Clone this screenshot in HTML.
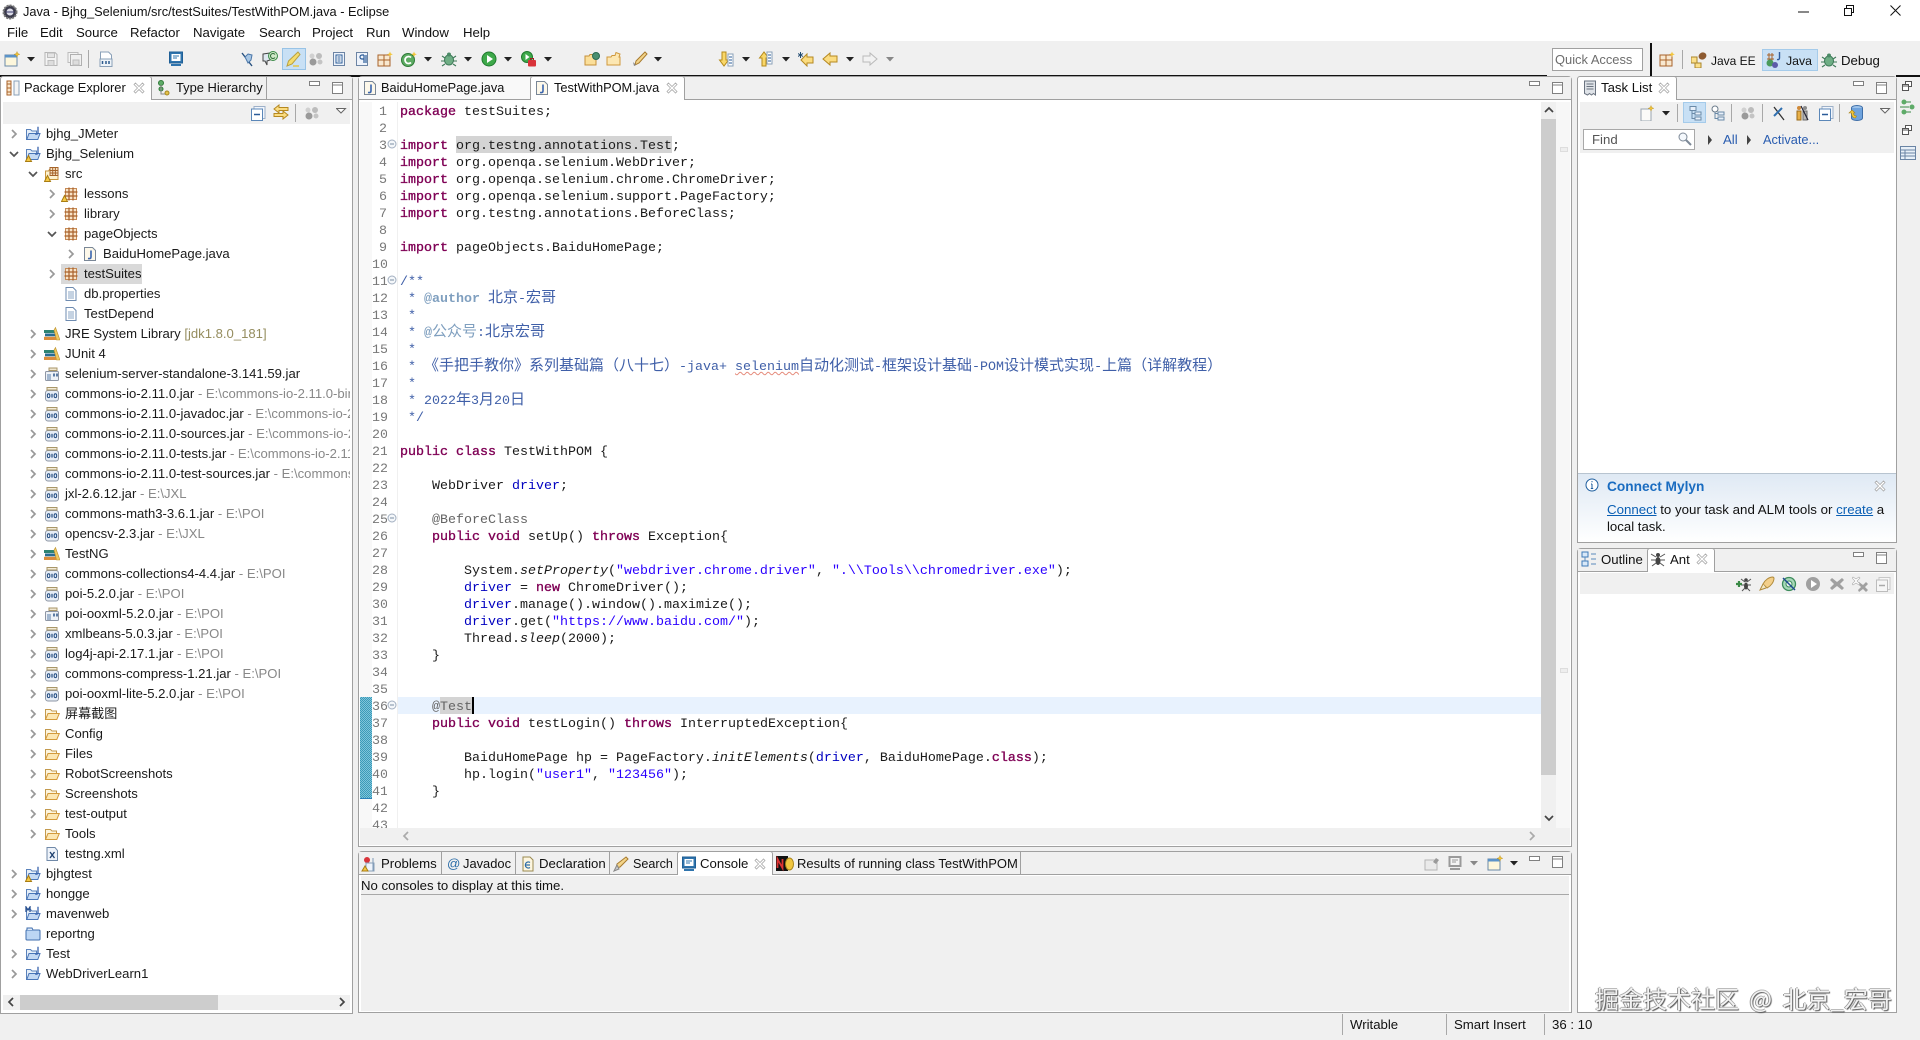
<!DOCTYPE html>
<html lang="en"><head><meta charset="utf-8"><title>Java - Bjhg_Selenium/src/testSuites/TestWithPOM.java - Eclipse</title>
<style>
html,body{margin:0;padding:0;width:1920px;height:1040px;overflow:hidden;background:#f0f0f0}
body{position:relative;font-family:"Liberation Sans","Noto Sans CJK SC",sans-serif;font-size:13.2px;color:#111}
div,svg{position:absolute}
svg{overflow:visible}
.g{width:16px;height:16px}
.t{white-space:pre;line-height:20px;height:20px}
.p{background:#fff;border:1px solid #a0a0a0;border-radius:4px 4px 0 0;box-sizing:border-box}
.tb{background:#f0f0f0;border-bottom:1px solid #a0a0a0;box-sizing:border-box;height:23px}
.at{background:#fff;border:1px solid #a0a0a0;border-bottom:0;border-radius:3px 3px 0 0;box-sizing:border-box}
.sep{width:1px;background:#a8a8a8}
.vb{background:#f0f0f0}
#tree{left:1px;top:124px;width:349px;height:860px;overflow:hidden}
.r{left:0;width:349px;height:20px;line-height:20px;white-space:pre;font-size:13.1px;color:#1a1a1a}
.r span{position:absolute;white-space:pre}
.r em{font-style:normal;color:#888}
.r svg{top:2px}
#code{left:400px;top:104px;width:1141px;height:724px;overflow:hidden;font-family:"Liberation Mono",monospace;font-size:13.33px;color:#1a1a1a}
.l{left:0;height:17px;line-height:17px;white-space:pre;width:1141px;text-spacing-trim:space-all}
.l b{color:#7f0055;font-weight:normal;-webkit-text-stroke:.35px #7f0055}
.c{color:#3f5fa8}.a{color:#646464}.s{color:#2a00ff}.f{color:#0000c0}.d{color:#7f9fbf;font-weight:bold}
.l em{font-style:italic}
.z{font-family:"Noto Sans CJK SC",sans-serif;font-size:15px;font-weight:400}
#nums{left:372px;top:104px;width:15px;height:724px;overflow:hidden;text-align:right;font-family:"Liberation Mono",monospace;font-size:13.33px;line-height:17px;color:#787878;white-space:pre}
#wm{left:1595px;top:980px;font-size:24px;line-height:36px;height:36px;color:#f2f2f2;white-space:pre;word-spacing:5px;font-family:"Noto Sans CJK SC",sans-serif;text-shadow:1px 1px 1px #555,-1px 0 0 #999,0 -1px 0 #bbb}
a{color:#0a5fb4}
</style></head>
<body>
<svg width="0" height="0" style="left:0;top:0">
<defs>
<symbol id="chr" viewBox="0 0 8 12"><path d="M2 2l4 4-4 4" fill="none" stroke="#999" stroke-width="1.7"/></symbol>
<symbol id="chd" viewBox="0 0 12 8"><path d="M2 2l4 4 4-4" fill="none" stroke="#555" stroke-width="1.7"/></symbol>
<symbol id="prj" viewBox="0 0 16 16"><path d="M1.500 13.500V3.500h4L7 5h4.500v8.500z" fill="#e6eff9" stroke="#5a82bb"/><path d="M1.800 13.500l2.200-6h11l-2.200 6z" fill="#c4d9f3" stroke="#4a76b8"/><path d="M13 .8v5.700q0 2-2.800 1.500" fill="none" stroke="#3a64ad" stroke-width="1.300"/></symbol>
<symbol id="warn" viewBox="0 0 16 16"><path d="M.5 15.500L3.500 9.500l3 6z" fill="#f6c945" stroke="#a97d12"/></symbol>
<symbol id="mvn" viewBox="0 0 16 16"><path d="M1.500 13.500V3.500h4L7 5h4.500v8.500z" fill="#e6eff9" stroke="#5a82bb"/><path d="M1.800 13.500l2.200-6h11l-2.200 6z" fill="#c4d9f3" stroke="#4a76b8"/><path d="M13 .8v5.700q0 2-2.800 1.500" fill="none" stroke="#3a64ad" stroke-width="1.300"/><path d="M1 6V1l2 3 2-3v5" fill="none" stroke="#274f8f" stroke-width="1.300"/></symbol>
<symbol id="cprj" viewBox="0 0 16 16"><rect x="1" y="4" width="14" height="10" rx="1" fill="#bcd6f4" stroke="#3f6eae"/><path d="M2 4V2h5l1 2" fill="#dfeaf8" stroke="#3f6eae"/></symbol>
<symbol id="src" viewBox="0 0 16 16"><path d="M1.500 13.500V5h3l1-1.500h8.500v10z" fill="#fdf2d0" stroke="#c8963f"/><path d="M6 1.500h8v8H6z" fill="#f7e2c4" stroke="#a5642a"/><path d="M6 4.500h8M6 7h8M8.700 1.500v8M11.400 1.500v8" stroke="#a5642a" fill="none"/></symbol>
<symbol id="pkg" viewBox="0 0 16 16"><rect x="2.500" y="2.500" width="11" height="11" fill="#f8e4c8" stroke="#c58a55"/><path d="M1.500 6h13M1.500 10h13M6 1.500v13M10 1.500v13" stroke="#a9602a" stroke-width="1.200" fill="none"/></symbol>
<symbol id="jar" viewBox="0 0 16 16"><rect x="1.500" y="4.500" width="13" height="10.500" rx="2.500" fill="#e6edf6" stroke="#8e96a4"/><rect x="3" y="1.500" width="10" height="2.500" fill="#f4ecd8" stroke="#a89668"/><ellipse cx="4.600" cy="9.700" rx="1.300" ry="1.900" fill="none" stroke="#1f4a80"/><path d="M8 7.800v3.800" stroke="#1f4a80" stroke-width="1.200"/><ellipse cx="11.400" cy="9.700" rx="1.300" ry="1.900" fill="none" stroke="#1f4a80"/></symbol>
<symbol id="jar2" viewBox="0 0 16 16"><rect x="1.500" y="5.500" width="13" height="9" rx="1" fill="#eef2f7" stroke="#8e96a4"/><rect x="5" y="2" width="8" height="2.500" fill="#f1e7d0" stroke="#a89668"/><path d="M3 9h4M3 11h4M3 13h4" stroke="#5a7fa8"/><path d="M10 7.500v3M13 7.500v3" stroke="#1f4a80" stroke-width="1.400"/></symbol>
<symbol id="lib" viewBox="0 0 16 16"><rect x="0" y="4" width="11" height="3" fill="#2f8472"/><rect x="1" y="7.500" width="11" height="2.800" fill="#2a6c93"/><rect x="0" y="10.800" width="12" height="3.200" fill="#db8c3b"/><path d="M11.500 1.500l4.500 12.500h-3.500L10 4z" fill="#f1c95e" stroke="#b98f2c" stroke-width=".6"/></symbol>
<symbol id="fold" viewBox="0 0 16 16"><path d="M1.500 13.500V3.500h5L8 5h4.500v3" fill="#fdf5de" stroke="#c39a4e"/><path d="M1.500 13.500l2.500-6h11.300l-2.500 6z" fill="#fce7b3" stroke="#d39a3c"/></symbol>
<symbol id="file" viewBox="0 0 16 16"><path d="M3 1.500h7l3 3v10H3z" fill="#fff" stroke="#6e8bb0"/><path d="M5 6h6M5 8h6M5 10h6M5 12h6" stroke="#8aa4c4"/></symbol>
<symbol id="jf" viewBox="0 0 16 16"><path d="M2.500 1.500h8l3 3v10h-11z" fill="#fdf8ea" stroke="#7a8797"/><path d="M9 4.500v6.500q0 2-3 1.500" fill="none" stroke="#3a64ad" stroke-width="1.600"/></symbol>
<symbol id="xml" viewBox="0 0 16 16"><path d="M3 1.500h8l2.500 3v10H3z" fill="#eef3fa" stroke="#7089a8"/><path d="M6 6l4.500 6M10.500 6L6 12" stroke="#1d3f6e" stroke-width="1.300"/></symbol>
<symbol id="x" viewBox="0 0 12 12"><path d="M2.500 1L6 4.500 9.500 1 11 2.500 7.500 6 11 9.500 9.500 11 6 7.500 2.500 11 1 9.500 4.500 6 1 2.500z" fill="#fff" stroke="#aaa" stroke-width=".8"/></symbol>
<symbol id="min" viewBox="0 0 12 6"><rect x=".5" y=".5" width="10" height="4" fill="#fff" stroke="#808080"/></symbol>
<symbol id="max" viewBox="0 0 12 12"><rect x=".5" y=".5" width="10" height="11" fill="#fff" stroke="#808080"/><path d="M.5 3h10" stroke="#808080"/></symbol>
<symbol id="dd" viewBox="0 0 8 5"><path d="M0 0h8L4 4.500z" fill="#222"/></symbol>
<symbol id="ddg" viewBox="0 0 8 5"><path d="M0 0h8L4 4.500z" fill="#888"/></symbol>
<symbol id="ddo" viewBox="0 0 11 6"><path d="M.5.500h9L5 5z" fill="#fff" stroke="#666"/></symbol>
<symbol id="new" viewBox="0 0 16 16"><rect x="1" y="4" width="12" height="11" fill="#fdf7dc" stroke="#6a8aa8"/><rect x="1" y="4" width="12" height="2.500" fill="#5b93c9"/><path d="M13 .5l.8 2 2 .8-2 .8-.8 2-.8-2-2-.8 2-.8z" fill="#f3c63a" stroke="#b58a1a" stroke-width=".4"/></symbol>
<symbol id="sv" viewBox="0 0 16 16"><path d="M2 1.500h10l2 2v11H2z" fill="#f4f4f4" stroke="#b5b5b5"/><rect x="4.500" y="2" width="7" height="4.500" fill="#e4e4e4" stroke="#bdbdbd"/><rect x="5" y="9.500" width="6" height="5" fill="#ddd" stroke="#bdbdbd"/></symbol>
<symbol id="sa" viewBox="0 0 16 16"><rect x="1" y="1.500" width="10" height="10" fill="#f4f4f4" stroke="#bcbcbc"/><rect x="3.500" y="3.500" width="11" height="11" fill="#f0f0f0" stroke="#b0b0b0"/><rect x="6" y="9" width="6" height="5" fill="#ddd" stroke="#bdbdbd"/></symbol>
<symbol id="bin" viewBox="0 0 16 16"><path d="M2.500 1h8l3 3v4h-11z" fill="#fff" stroke="#8aa0b8"/><rect x="2" y="8" width="12" height="7.500" fill="#eef3f8" stroke="#8aa0b8"/><path d="M4.500 10v3M8 10v3M11 10v3" stroke="#2c5b8d" stroke-width="1.500"/></symbol>
<symbol id="con" viewBox="0 0 16 16"><rect x="1.500" y="1" width="13" height="11" fill="#2f74ad" stroke="#1f5f96"/><rect x="3.500" y="3" width="9" height="7" fill="#fff"/><path d="M5 5h6M5 7h4" stroke="#2f74ad"/><rect x="3" y="13" width="10" height="2" fill="#2f74ad"/></symbol>
<symbol id="cong" viewBox="0 0 16 16"><rect x="1.500" y="1" width="13" height="11" fill="#9a9a9a"/><rect x="3.500" y="3" width="9" height="7" fill="#f4f4f4"/><path d="M5 5h6M5 7h4" stroke="#9a9a9a"/><rect x="3" y="13" width="10" height="2" fill="#9a9a9a"/></symbol>
<symbol id="nxt" viewBox="0 0 16 16"><path d="M3 2l10 13" stroke="#26507f" stroke-width="1.400"/><path d="M9 3l4 1-1 5-3 3-3-6z" fill="#a9c7e4" stroke="#4a76a8"/></symbol>
<symbol id="ref" viewBox="0 0 16 16"><path d="M1 3l7-1v7l-3 1v4l-2-4H1z" fill="#dfe8f0" stroke="#444"/><circle cx="11" cy="5" r="4.500" fill="#cfe8c8" stroke="#3a8a46"/><path d="M13 3.500A2.500 2.500 0 1 0 13 6.500" fill="none" stroke="#2f6f38"/></symbol>
<symbol id="hl" viewBox="0 0 16 16"><path d="M13 1l2 2.500L7 13l-5 2 1.500-5z" fill="#f4dc6e" stroke="#b8a040"/><path d="M8 15h6" stroke="#e4c648" stroke-width="1.500"/></symbol>
<symbol id="gr" viewBox="0 0 16 16"><circle cx="5" cy="11" r="3.500" fill="#9a9a9a"/><circle cx="11" cy="5" r="3" fill="#bcbcbc"/><circle cx="4" cy="5" r="2.500" fill="#d0d0d0"/><circle cx="12" cy="11" r="2.500" fill="#c4c4c4"/></symbol>
<symbol id="tbl" viewBox="0 0 16 16"><rect x="2.500" y="1.500" width="11" height="13" fill="#eef3fb" stroke="#6c84a4"/><rect x="5" y="4" width="6" height="8" fill="#fff" stroke="#2b5c98"/><path d="M6.500 6h3M6.500 8h3M6.500 10h3" stroke="#2b5c98"/></symbol>
<symbol id="pil" viewBox="0 0 16 16"><rect x="2.500" y="1.500" width="11" height="13" fill="#eef3fb" stroke="#6c84a4"/><path d="M10 4v8M12 4v8M10 4H8a2 2 0 0 0 0 4h2" fill="none" stroke="#2b5c98" stroke-width="1.200"/></symbol>
<symbol id="grid" viewBox="0 0 16 16"><rect x="1" y="4" width="12" height="11" fill="#f8e8d0" stroke="#a8622a"/><path d="M1 9h12M7 4v11" stroke="#a8622a"/><path d="M13 .5l.8 2 2 .8-2 .8-.8 2-.8-2-2-.8 2-.8z" fill="#f3c63a"/></symbol>
<symbol id="cg" viewBox="0 0 16 16"><circle cx="7" cy="9" r="6.500" fill="#5cab62" stroke="#2f7a38"/><path d="M10 6.500A3.500 3.500 0 1 0 10 11.500" fill="none" stroke="#fff" stroke-width="1.800"/><path d="M13 .5l.8 2 2 .8-2 .8-.8 2-.8-2-2-.8 2-.8z" fill="#f3c63a"/></symbol>
<symbol id="bug" viewBox="0 0 16 16"><ellipse cx="8" cy="9" rx="4.500" ry="5" fill="#6fae85" stroke="#3e7a58"/><circle cx="8" cy="3.500" r="2" fill="#4c8a66"/><path d="M1 5l3 2M15 5l-3 2M0 10h3.500M16 10h-3.500M1 15l3-2M15 15l-3-2" stroke="#3e7a58" stroke-width="1.100"/></symbol>
<symbol id="run" viewBox="0 0 16 16"><circle cx="8" cy="8" r="7" fill="#3ea94a" stroke="#1f7a2e"/><path d="M6 4l6 4-6 4z" fill="#fff"/></symbol>
<symbol id="cov" viewBox="0 0 16 16"><circle cx="6" cy="6" r="5.500" fill="#3ea94a" stroke="#1f7a2e"/><path d="M4.500 3l4 3-4 3z" fill="#fff"/><rect x="7" y="9" width="8" height="6.500" rx="1" fill="#d9333a"/><path d="M9.500 9V7.500h3V9" fill="none" stroke="#a01e24"/></symbol>
<symbol id="fo2" viewBox="0 0 16 16"><path d="M1 14V5h4l1-1.500h6V14z" fill="#fbdf9a" stroke="#c6913a"/><circle cx="12" cy="5" r="3.500" fill="#4a8f70" stroke="#2a6a52"/></symbol>
<symbol id="fo3" viewBox="0 0 16 16"><path d="M1 14V6h4l1-1.500h3l1-3 4 1.500-1 3h1V14z" fill="#fce7b3" stroke="#cf983c"/></symbol>
<symbol id="pen" viewBox="0 0 16 16"><path d="M13 1l2 2-8 9-4 2 1-4z" fill="#f3d489" stroke="#a77a2e"/><path d="M1 11l3 3-2 1z" fill="#888"/></symbol>
<symbol id="au" viewBox="0 0 16 16"><path d="M4 1h4v8h2.500L6 15 1.500 9H4z" fill="#f9d769" stroke="#b58a1a"/><rect x="10" y="3" width="5" height="12" fill="#fff" stroke="#8aa0b8"/><path d="M11 6h3M11 9h3M11 12h3" stroke="#2b5c98"/></symbol>
<symbol id="ad" viewBox="0 0 16 16"><path d="M4 15h4V7h2.500L6 1 1.500 7H4z" fill="#f9d769" stroke="#b58a1a"/><rect x="9" y="1" width="5" height="12" fill="#fff" stroke="#8aa0b8"/><path d="M10 4h3M10 7h3M10 10h3" stroke="#2b5c98"/></symbol>
<symbol id="bl" viewBox="0 0 16 16"><path d="M1 8l7-6v3h7v6H8v3z" fill="#fbdc80" stroke="#b58820"/></symbol>
<symbol id="blx" viewBox="0 0 16 16"><path d="M3 9l6-6v3h6v6H9v3z" fill="#fbdc80" stroke="#b58820"/><path d="M2.500 1v6M0 2.500l5 3M5 2.500l-5 3" stroke="#1f4a70"/></symbol>
<symbol id="frg" viewBox="0 0 16 16"><path d="M15 8L8 2v3H1v6h7v3z" fill="#f2f2f2" stroke="#bababa"/></symbol>
<symbol id="jee" viewBox="0 0 16 16"><rect x="0" y="5" width="6" height="6" fill="#fbe08c" stroke="#a8842a"/><rect x="4" y="11" width="6" height="5" fill="#fbe08c" stroke="#a8842a"/><ellipse cx="11.500" cy="4" rx="4" ry="3.500" transform="rotate(-30 11.500 4)" fill="#8d5a30"/></symbol>
<symbol id="jav" viewBox="0 0 16 16"><path d="M1 3h7M1 7h7M3 1v8M6 1v8" stroke="#a8622a"/><circle cx="4" cy="11" r="3.500" fill="#4a9a5a"/><circle cx="9" cy="13" r="3" fill="#5c5ca8"/><path d="M13.500 0v6q0 2-2.500 1.500" fill="none" stroke="#2d5a9a" stroke-width="1.400"/></symbol>
<symbol id="hier" viewBox="0 0 16 16"><circle cx="5" cy="3" r="2.500" fill="#5eab68" stroke="#2f7a38"/><circle cx="5" cy="9" r="2" fill="#5eab68" stroke="#2f7a38"/><circle cx="11" cy="13" r="2" fill="#e6c24c" stroke="#a58820"/><path d="M5 5v9h4" fill="none" stroke="#888"/></symbol>
<symbol id="pe" viewBox="0 0 16 16"><path d="M2 1h4v14H2zM2 4h4M2 8h4M2 12h4" fill="#fbe8cc" stroke="#a8622a"/><rect x="9" y="1" width="5" height="14" fill="#f4f4f4" stroke="#8aa0b8"/></symbol>
<symbol id="col" viewBox="0 0 16 16"><rect x="4" y="1.500" width="11" height="12" fill="#f2f6fc" stroke="#9db0c8"/><rect x="1.500" y="4" width="11" height="11.500" fill="#fff" stroke="#5b87b8"/><path d="M4 9.500h6" stroke="#2b5c98" stroke-width="1.500"/></symbol>
<symbol id="lnk" viewBox="0 0 16 16"><path d="M6 1L1 5l5 4V6.500h9v-3H6z" fill="#fbdc80" stroke="#b58820"/><path d="M10 7l5 4-5 4v-2.500H1v-3h9z" fill="#fbdc80" stroke="#b58820"/></symbol>
<symbol id="task" viewBox="0 0 16 16"><path d="M2.500 1h11v14l-2-1.500-2 1.500-2-1.500-2 1.500-3-1.500z" fill="#dfe3e8" stroke="#6a7380"/><path d="M4.500 4h7M4.500 6.500h7M4.500 9h7" stroke="#6a7380"/></symbol>
<symbol id="nt" viewBox="0 0 16 16"><rect x="2" y="4" width="10" height="12" fill="#fbfbf8" stroke="#9aa4b0"/><path d="M12 .5l.8 2 2 .8-2 .8-.8 2-.8-2-2-.8 2-.8z" fill="#f3c63a" stroke="#b58a1a" stroke-width=".4"/></symbol>
<symbol id="tr1" viewBox="0 0 16 16"><path d="M3 1.500h6v4H3zM8 7h6v3H8zM8 12h6v3H8z" fill="#e8f0fa" stroke="#6a8aa8"/><path d="M5 5.500V13.500h3M5 8.500h3" stroke="#6a8aa8" fill="none"/></symbol>
<symbol id="tr2" viewBox="0 0 16 16"><circle cx="5" cy="4" r="3" fill="#fff" stroke="#6a7a8a"/><path d="M8 7h6v3H8zM8 12h6v3H8z" fill="#e8f0fa" stroke="#6a8aa8"/><path d="M5 7V13.500h3M5 8.500h3" stroke="#6a8aa8" fill="none"/></symbol>
<symbol id="fx" viewBox="0 0 16 16"><path d="M3 2l10 13" stroke="#333" stroke-width="1.300"/><path d="M3 11l8-8" stroke="#2f6fb0" stroke-width="2"/></symbol>
<symbol id="fp" viewBox="0 0 16 16"><circle cx="5" cy="3" r="2" fill="#d08a3a"/><path d="M3 6h4v9H3z" fill="#e8b048" stroke="#9a6a1a"/><circle cx="11" cy="3" r="2" fill="#8a8a8a"/><path d="M9 6h4v9H9z" fill="#b8b8b8" stroke="#6a6a6a"/><path d="M7 1l7 14" stroke="#223" stroke-width="1.200"/></symbol>
<symbol id="syn" viewBox="0 0 16 16"><ellipse cx="9" cy="3" rx="5.500" ry="2.500" fill="#9dc3ea" stroke="#3e6ea8"/><path d="M3.500 3v10c0 1.500 2.500 2.500 5.500 2.500s5.500-1 5.500-2.500V3" fill="#6fa3dd" stroke="#3e6ea8"/><path d="M1 8l3-3 3 3-1.500 0c0 2 1 3 3 3l-1 2c-3 0-4-2-4-5z" fill="#f3c63a" stroke="#a8841a" stroke-width=".6"/></symbol>
<symbol id="srch" viewBox="0 0 14 14"><circle cx="5" cy="5" r="4" fill="#f4f8fc" stroke="#7e8a98"/><path d="M8 8l5 5" stroke="#7e8a98" stroke-width="2"/></symbol>
<symbol id="pb" viewBox="0 0 16 16"><circle cx="6" cy="4" r="3" fill="#d9333a"/><rect x="5" y="7" width="8" height="8" fill="#eef3fa" stroke="#8aa0b8"/><path d="M1 15l3-5 3 5z" fill="#f6c945" stroke="#a97d12"/><path d="M12 2v13" stroke="#7e9ab8"/></symbol>
<symbol id="de" viewBox="0 0 16 16"><path d="M3 1h7l3 3v11H3z" fill="#fdf6e0" stroke="#9a8a50"/><path d="M10 6.500A3 3 0 1 0 10 11.500M5 9h5" fill="none" stroke="#2b6ca8" stroke-width="1.200"/></symbol>
<symbol id="sr" viewBox="0 0 16 16"><path d="M13 1l2 2-8 8-4 1 1-4z" fill="#f3d489" stroke="#a77a2e"/><path d="M4 9l-3 6 5-2z" fill="#ccc" stroke="#888"/></symbol>
<symbol id="ng" viewBox="0 0 18 18"><rect x="0" y="1" width="12" height="15" fill="#111"/><path d="M1.500 13V4l5 9V4" fill="none" stroke="#d33" stroke-width="1.800"/><ellipse cx="13.500" cy="9" rx="4" ry="6" fill="#f0c640" stroke="#a8841a"/></symbol>
<symbol id="ol" viewBox="0 0 16 16"><rect x="1" y="1" width="6" height="5" fill="#d8e8f8" stroke="#3e7ab8"/><rect x="1" y="10" width="6" height="5" fill="#d8e8f8" stroke="#3e7ab8"/><path d="M10 3h5M10 8h5M10 13h5M4 6v4" stroke="#5a8abb"/></symbol>
<symbol id="ant" viewBox="0 0 16 16"><ellipse cx="8" cy="10" rx="2.500" ry="4" fill="#444"/><circle cx="8" cy="4" r="2" fill="#444"/><path d="M1 3l5 3M15 3l-5 3M1 9h5M15 9h-5M2 15l4-3M14 15l-4-3" stroke="#555"/></symbol>
<symbol id="antp" viewBox="0 0 16 16"><ellipse cx="10" cy="10" rx="2" ry="3.500" fill="#444"/><circle cx="10" cy="4" r="1.800" fill="#444"/><path d="M5 3l4 3M15 3l-4 3M5 9h4M15 9h-4M6 15l3-3M14 15l-3-3" stroke="#555"/><path d="M0 8h6M3 5v6" stroke="#3a8a46" stroke-width="2.200"/></symbol>
<symbol id="rk" viewBox="0 0 16 16"><path d="M14 1l1 1c0 4-3 8-7 10l-4-4C6 4 10 1 14 1z" fill="#f3cf8a" stroke="#b08a3a"/><path d="M4 8l-3 6 6-2" fill="#f2e8c8" stroke="#b08a3a"/></symbol>
<symbol id="tg" viewBox="0 0 16 16"><circle cx="8" cy="8" r="6.500" fill="#a8d8b8" stroke="#3d8c5c" stroke-width="1.300"/><circle cx="8" cy="8" r="3" fill="#eef8f0" stroke="#3d8c5c"/><path d="M2 2l12 12" stroke="#1f4a90" stroke-width="1.500"/></symbol>
<symbol id="rg" viewBox="0 0 16 16"><circle cx="8" cy="8" r="7" fill="#a0a0a0"/><path d="M6 4l6 4-6 4z" fill="#fff"/></symbol>
<symbol id="xg" viewBox="0 0 16 16"><path d="M3 2l5 4 5-4 2 2-4 4 4 4-2 2-5-4-5 4-2-2 4-4-4-4z" fill="#a0a0a0"/></symbol>
<symbol id="xxg" viewBox="0 0 16 16"><path d="M7 6l4 3 3-3 2 2-3 3 3 3-2 2-3-3-4 3-1-2 3-3-3-3z" fill="#a0a0a0"/><path d="M1 1l3 2 3-2 1 1-3 3 3 3-1 1-3-2-3 2-1-1 3-3-3-3z" fill="#fff" stroke="#aaa" stroke-width=".6"/></symbol>
<symbol id="colg" viewBox="0 0 16 16"><rect x="4" y="1.500" width="11" height="12" fill="#f6f6f6" stroke="#c8c8c8"/><rect x="1.500" y="4" width="11" height="11.500" fill="#f6f6f6" stroke="#bcbcbc"/><path d="M4 9.500h6" stroke="#aaa" stroke-width="1.500"/></symbol>
<symbol id="pin" viewBox="0 0 16 16"><rect x="1" y="5" width="12" height="10" fill="#eaeaea" stroke="#b5b5b5"/><path d="M9 7l3-4 3 2-3 4z" fill="#9a9a9a"/></symbol>
<symbol id="res" viewBox="0 0 12 12"><rect x="3.500" y=".5" width="6" height="5" fill="#fff" stroke="#555"/><rect x=".5" y="3.500" width="6" height="6" fill="#fff" stroke="#555"/><path d="M.5 5h6" stroke="#555"/></symbol>
<symbol id="mod" viewBox="0 0 16 16"><path d="M5 3h6M5 13h6" stroke="#3a8a46"/><circle cx="4" cy="3" r="2.500" fill="#5eab68"/><circle cx="4" cy="13" r="2.500" fill="#5eab68"/><circle cx="12" cy="8" r="2.500" fill="#5eab68"/><path d="M0 8h9" stroke="#3a8a46"/></symbol>
<symbol id="tb2" viewBox="0 0 16 16"><rect x=".5" y="1.500" width="15" height="13" fill="#e8f0f8" stroke="#6a84a4"/><path d="M.5 5h15M.5 8h15M.5 11h15M5 5v10" stroke="#6a84a4"/></symbol>
<symbol id="fm" viewBox="0 0 10 10"><circle cx="5" cy="5" r="4" fill="#f4f7fa" stroke="#a2afc0"/><path d="M3 5h4" stroke="#7a8da2"/></symbol>
</defs></svg>

<!-- title & menu -->
<div style="left:0;top:0;width:1920px;height:41px;background:#fff"></div>
<svg class="g" style="left:2px;top:4px"><circle cx="8" cy="8" r="6.500" fill="#3a3a4a" stroke="#777" stroke-width="2" stroke-dasharray="2 1"/><circle cx="8" cy="8" r="3.500" fill="#dcdce8"/><path d="M4 8h8" stroke="#3a3a6a"/></svg>
<div class="t" style="left:23px;top:2px;font-size:12.8px">Java - Bjhg_Selenium/src/testSuites/TestWithPOM.java - Eclipse</div>
<svg width="12" height="12" style="left:1798px;top:5px"><path d="M0 7h11" stroke="#111"/></svg>
<svg width="12" height="12" style="left:1844px;top:5px"><rect x=".5" y="3.500" width="7" height="7" fill="#fff" stroke="#111"/><path d="M2.500 3V.5h7v7H8" fill="none" stroke="#111"/></svg>
<svg width="12" height="12" style="left:1890px;top:5px"><path d="M.5.500l10 10M10.500.5l-10 10" stroke="#111"/></svg>
<div class="t" style="left:7px;top:23px">File</div>
<div class="t" style="left:40px;top:23px">Edit</div>
<div class="t" style="left:76px;top:23px">Source</div>
<div class="t" style="left:130px;top:23px">Refactor</div>
<div class="t" style="left:193px;top:23px">Navigate</div>
<div class="t" style="left:259px;top:23px">Search</div>
<div class="t" style="left:312px;top:23px">Project</div>
<div class="t" style="left:366px;top:23px">Run</div>
<div class="t" style="left:402px;top:23px">Window</div>
<div class="t" style="left:463px;top:23px">Help</div>

<!-- toolbar -->
<div style="left:0;top:41px;width:1920px;height:34px;background:#f0f0f0"></div>
<div style="left:0;top:75px;width:1547px;height:1.500px;background:#111"></div>
<div style="left:1896px;top:75px;width:24px;height:1.500px;background:#111"></div>
<div style="left:1650px;top:43px;width:1.500px;height:33px;background:#111"></div>
<div style="left:282px;top:48px;width:24px;height:22px;background:#c8e0f5;border:1px solid #98c3e6;box-sizing:border-box"></div>
<svg class="g" style="left:4px;top:51px"><use href="#new"/></svg>
<svg width="8" height="5" style="left:27px;top:57px"><use href="#dd"/></svg>
<svg class="g" style="left:43px;top:51px"><use href="#sv"/></svg>
<svg class="g" style="left:67px;top:51px"><use href="#sa"/></svg>
<div class="sep" style="left:88px;top:50px;height:18px"></div>
<svg class="g" style="left:98px;top:51px"><use href="#bin"/></svg>
<svg class="g" style="left:168px;top:51px"><use href="#con"/></svg>
<svg class="g" style="left:239px;top:51px"><use href="#nxt"/></svg>
<svg class="g" style="left:262px;top:51px"><use href="#ref"/></svg>
<svg class="g" style="left:285px;top:51px"><use href="#hl"/></svg>
<svg class="g" style="left:308px;top:51px"><use href="#gr"/></svg>
<svg class="g" style="left:331px;top:51px"><use href="#tbl"/></svg>
<svg class="g" style="left:354px;top:51px"><use href="#pil"/></svg>
<svg class="g" style="left:377px;top:51px"><use href="#grid"/></svg>
<svg class="g" style="left:401px;top:51px"><use href="#cg"/></svg>
<svg width="8" height="5" style="left:424px;top:57px"><use href="#dd"/></svg>
<svg class="g" style="left:441px;top:51px"><use href="#bug"/></svg>
<svg width="8" height="5" style="left:464px;top:57px"><use href="#dd"/></svg>
<svg class="g" style="left:481px;top:51px"><use href="#run"/></svg>
<svg width="8" height="5" style="left:504px;top:57px"><use href="#dd"/></svg>
<svg class="g" style="left:521px;top:51px"><use href="#cov"/></svg>
<svg width="8" height="5" style="left:544px;top:57px"><use href="#dd"/></svg>
<svg class="g" style="left:584px;top:51px"><use href="#fo2"/></svg>
<svg class="g" style="left:606px;top:51px"><use href="#fo3"/></svg>
<svg class="g" style="left:632px;top:51px"><use href="#pen"/></svg>
<svg width="8" height="5" style="left:654px;top:57px"><use href="#dd"/></svg>
<svg class="g" style="left:718px;top:51px"><use href="#au"/></svg>
<svg width="8" height="5" style="left:742px;top:57px"><use href="#dd"/></svg>
<svg class="g" style="left:758px;top:51px"><use href="#ad"/></svg>
<svg width="8" height="5" style="left:782px;top:57px"><use href="#dd"/></svg>
<svg class="g" style="left:798px;top:51px"><use href="#blx"/></svg>
<svg class="g" style="left:822px;top:51px"><use href="#bl"/></svg>
<svg width="8" height="5" style="left:846px;top:57px"><use href="#dd"/></svg>
<svg class="g" style="left:862px;top:51px"><use href="#frg"/></svg>
<svg width="8" height="5" style="left:886px;top:57px"><use href="#ddg"/></svg>

<!-- quick access + perspectives -->
<div style="left:1552px;top:48px;width:91px;height:23px;background:#fff;border:1px solid #a0a0a0;box-sizing:border-box"></div>
<div class="t" style="left:1555px;top:50px;color:#6d6d6d;font-size:12.9px">Quick Access</div>
<svg class="g" style="left:1659px;top:51px"><use href="#grid"/></svg>
<div class="sep" style="left:1682px;top:50px;height:19px"></div>
<svg class="g" style="left:1691px;top:52px"><use href="#jee"/></svg>
<div class="t" style="left:1711px;top:51px;font-size:12px">Java EE</div>
<div style="left:1762px;top:49px;width:56px;height:22px;background:#c8e0f5;border:1px solid #a5cbea;box-sizing:border-box"></div>
<svg class="g" style="left:1766px;top:52px"><use href="#jav"/></svg>
<div class="t" style="left:1786px;top:51px;font-size:12.3px">Java</div>
<svg class="g" style="left:1821px;top:52px"><use href="#bug"/></svg>
<div class="t" style="left:1841px;top:51px">Debug</div>

<!-- package explorer -->
<div class="p" style="left:0;top:76px;width:353px;height:938px"></div>
<div class="tb" style="left:1px;top:77px;width:351px"></div>
<div class="at" style="left:0;top:76px;width:152px;height:24px"></div>
<div style="left:266px;top:77px;width:1px;height:22px;background:#a0a0a0"></div>
<svg class="g" style="left:5px;top:80px"><use href="#pe"/></svg>
<div class="t" style="left:24px;top:78px;font-size:12.9px">Package Explorer</div>
<svg width="12" height="12" style="left:133px;top:82px"><use href="#x"/></svg>
<svg class="g" style="left:156px;top:80px"><use href="#hier"/></svg>
<div class="t" style="left:176px;top:78px;font-size:12.9px">Type Hierarchy</div>
<svg width="12" height="6" style="left:309px;top:81px"><use href="#min"/></svg>
<svg width="12" height="12" style="left:332px;top:82px"><use href="#max"/></svg>
<div class="vb" style="left:3px;top:102px;width:347px;height:22px"></div>
<svg class="g" style="left:250px;top:105px"><use href="#col"/></svg>
<svg class="g" style="left:273px;top:104px"><use href="#lnk"/></svg>
<div class="sep" style="left:295px;top:104px;height:18px"></div>
<svg class="g" style="left:304px;top:105px"><use href="#gr"/></svg>
<svg width="11" height="6" style="left:336px;top:108px"><use href="#ddo"/></svg>

<div id="tree">
<div style="left:60px;top:140px;width:81px;height:20px;background:#d9d9d9"></div>
<div class="r" style="top:0"><svg width="8" height="12" style="left:9px;top:4px"><use href="#chr"/></svg><svg class="g" style="left:24px"><use href="#prj"/></svg><span style="left:45px">bjhg_JMeter</span></div>
<div class="r" style="top:20px"><svg width="12" height="8" style="left:7px;top:6px"><use href="#chd"/></svg><svg class="g" style="left:24px"><use href="#prj"/></svg><svg class="g" style="left:24px"><use href="#warn"/></svg><span style="left:45px">Bjhg_Selenium</span></div>
<div class="r" style="top:40px"><svg width="12" height="8" style="left:26px;top:6px"><use href="#chd"/></svg><svg class="g" style="left:43px"><use href="#src"/></svg><svg class="g" style="left:43px"><use href="#warn"/></svg><span style="left:64px">src</span></div>
<div class="r" style="top:60px"><svg width="8" height="12" style="left:47px;top:4px"><use href="#chr"/></svg><svg class="g" style="left:62px"><use href="#pkg"/></svg><svg class="g" style="left:60px"><use href="#warn"/></svg><span style="left:83px">lessons</span></div>
<div class="r" style="top:80px"><svg width="8" height="12" style="left:47px;top:4px"><use href="#chr"/></svg><svg class="g" style="left:62px"><use href="#pkg"/></svg><span style="left:83px">library</span></div>
<div class="r" style="top:100px"><svg width="12" height="8" style="left:45px;top:6px"><use href="#chd"/></svg><svg class="g" style="left:62px"><use href="#pkg"/></svg><span style="left:83px">pageObjects</span></div>
<div class="r" style="top:120px"><svg width="8" height="12" style="left:66px;top:4px"><use href="#chr"/></svg><svg class="g" style="left:81px"><use href="#jf"/></svg><span style="left:102px">BaiduHomePage.java</span></div>
<div class="r" style="top:140px"><svg width="8" height="12" style="left:47px;top:4px"><use href="#chr"/></svg><svg class="g" style="left:62px"><use href="#pkg"/></svg><span style="left:83px">testSuites</span></div>
<div class="r" style="top:160px"><svg class="g" style="left:62px"><use href="#file"/></svg><span style="left:83px">db.properties</span></div>
<div class="r" style="top:180px"><svg class="g" style="left:62px"><use href="#file"/></svg><span style="left:83px">TestDepend</span></div>
<div class="r" style="top:200px"><svg width="8" height="12" style="left:28px;top:4px"><use href="#chr"/></svg><svg class="g" style="left:43px"><use href="#lib"/></svg><span style="left:64px">JRE System Library <em style="color:#958d5f">[jdk1.8.0_181]</em></span></div>
<div class="r" style="top:220px"><svg width="8" height="12" style="left:28px;top:4px"><use href="#chr"/></svg><svg class="g" style="left:43px"><use href="#lib"/></svg><span style="left:64px">JUnit 4</span></div>
<div class="r" style="top:240px"><svg width="8" height="12" style="left:28px;top:4px"><use href="#chr"/></svg><svg class="g" style="left:43px"><use href="#jar2"/></svg><span style="left:64px">selenium-server-standalone-3.141.59.jar</span></div>
<div class="r" style="top:260px"><svg width="8" height="12" style="left:28px;top:4px"><use href="#chr"/></svg><svg class="g" style="left:43px"><use href="#jar"/></svg><span style="left:64px">commons-io-2.11.0.jar <em>- E:\commons-io-2.11.0-bin</em></span></div>
<div class="r" style="top:280px"><svg width="8" height="12" style="left:28px;top:4px"><use href="#chr"/></svg><svg class="g" style="left:43px"><use href="#jar"/></svg><span style="left:64px">commons-io-2.11.0-javadoc.jar <em>- E:\commons-io-2.11.0</em></span></div>
<div class="r" style="top:300px"><svg width="8" height="12" style="left:28px;top:4px"><use href="#chr"/></svg><svg class="g" style="left:43px"><use href="#jar"/></svg><span style="left:64px">commons-io-2.11.0-sources.jar <em>- E:\commons-io-2.11.0</em></span></div>
<div class="r" style="top:320px"><svg width="8" height="12" style="left:28px;top:4px"><use href="#chr"/></svg><svg class="g" style="left:43px"><use href="#jar"/></svg><span style="left:64px">commons-io-2.11.0-tests.jar <em>- E:\commons-io-2.11.0</em></span></div>
<div class="r" style="top:340px"><svg width="8" height="12" style="left:28px;top:4px"><use href="#chr"/></svg><svg class="g" style="left:43px"><use href="#jar"/></svg><span style="left:64px">commons-io-2.11.0-test-sources.jar <em>- E:\commons-io-2.11.0</em></span></div>
<div class="r" style="top:360px"><svg width="8" height="12" style="left:28px;top:4px"><use href="#chr"/></svg><svg class="g" style="left:43px"><use href="#jar"/></svg><span style="left:64px">jxl-2.6.12.jar <em>- E:\JXL</em></span></div>
<div class="r" style="top:380px"><svg width="8" height="12" style="left:28px;top:4px"><use href="#chr"/></svg><svg class="g" style="left:43px"><use href="#jar"/></svg><span style="left:64px">commons-math3-3.6.1.jar <em>- E:\POI</em></span></div>
<div class="r" style="top:400px"><svg width="8" height="12" style="left:28px;top:4px"><use href="#chr"/></svg><svg class="g" style="left:43px"><use href="#jar"/></svg><span style="left:64px">opencsv-2.3.jar <em>- E:\JXL</em></span></div>
<div class="r" style="top:420px"><svg width="8" height="12" style="left:28px;top:4px"><use href="#chr"/></svg><svg class="g" style="left:43px"><use href="#lib"/></svg><span style="left:64px">TestNG</span></div>
<div class="r" style="top:440px"><svg width="8" height="12" style="left:28px;top:4px"><use href="#chr"/></svg><svg class="g" style="left:43px"><use href="#jar"/></svg><span style="left:64px">commons-collections4-4.4.jar <em>- E:\POI</em></span></div>
<div class="r" style="top:460px"><svg width="8" height="12" style="left:28px;top:4px"><use href="#chr"/></svg><svg class="g" style="left:43px"><use href="#jar"/></svg><span style="left:64px">poi-5.2.0.jar <em>- E:\POI</em></span></div>
<div class="r" style="top:480px"><svg width="8" height="12" style="left:28px;top:4px"><use href="#chr"/></svg><svg class="g" style="left:43px"><use href="#jar2"/></svg><span style="left:64px">poi-ooxml-5.2.0.jar <em>- E:\POI</em></span></div>
<div class="r" style="top:500px"><svg width="8" height="12" style="left:28px;top:4px"><use href="#chr"/></svg><svg class="g" style="left:43px"><use href="#jar"/></svg><span style="left:64px">xmlbeans-5.0.3.jar <em>- E:\POI</em></span></div>
<div class="r" style="top:520px"><svg width="8" height="12" style="left:28px;top:4px"><use href="#chr"/></svg><svg class="g" style="left:43px"><use href="#jar"/></svg><span style="left:64px">log4j-api-2.17.1.jar <em>- E:\POI</em></span></div>
<div class="r" style="top:540px"><svg width="8" height="12" style="left:28px;top:4px"><use href="#chr"/></svg><svg class="g" style="left:43px"><use href="#jar"/></svg><span style="left:64px">commons-compress-1.21.jar <em>- E:\POI</em></span></div>
<div class="r" style="top:560px"><svg width="8" height="12" style="left:28px;top:4px"><use href="#chr"/></svg><svg class="g" style="left:43px"><use href="#jar"/></svg><span style="left:64px">poi-ooxml-lite-5.2.0.jar <em>- E:\POI</em></span></div>
<div class="r" style="top:580px"><svg width="8" height="12" style="left:28px;top:4px"><use href="#chr"/></svg><svg class="g" style="left:43px"><use href="#fold"/></svg><span style="left:64px">屏幕截图</span></div>
<div class="r" style="top:600px"><svg width="8" height="12" style="left:28px;top:4px"><use href="#chr"/></svg><svg class="g" style="left:43px"><use href="#fold"/></svg><span style="left:64px">Config</span></div>
<div class="r" style="top:620px"><svg width="8" height="12" style="left:28px;top:4px"><use href="#chr"/></svg><svg class="g" style="left:43px"><use href="#fold"/></svg><span style="left:64px">Files</span></div>
<div class="r" style="top:640px"><svg width="8" height="12" style="left:28px;top:4px"><use href="#chr"/></svg><svg class="g" style="left:43px"><use href="#fold"/></svg><span style="left:64px">RobotScreenshots</span></div>
<div class="r" style="top:660px"><svg width="8" height="12" style="left:28px;top:4px"><use href="#chr"/></svg><svg class="g" style="left:43px"><use href="#fold"/></svg><span style="left:64px">Screenshots</span></div>
<div class="r" style="top:680px"><svg width="8" height="12" style="left:28px;top:4px"><use href="#chr"/></svg><svg class="g" style="left:43px"><use href="#fold"/></svg><span style="left:64px">test-output</span></div>
<div class="r" style="top:700px"><svg width="8" height="12" style="left:28px;top:4px"><use href="#chr"/></svg><svg class="g" style="left:43px"><use href="#fold"/></svg><span style="left:64px">Tools</span></div>
<div class="r" style="top:720px"><svg class="g" style="left:43px"><use href="#xml"/></svg><span style="left:64px">testng.xml</span></div>
<div class="r" style="top:740px"><svg width="8" height="12" style="left:9px;top:4px"><use href="#chr"/></svg><svg class="g" style="left:24px"><use href="#prj"/></svg><svg class="g" style="left:24px"><use href="#warn"/></svg><span style="left:45px">bjhgtest</span></div>
<div class="r" style="top:760px"><svg width="8" height="12" style="left:9px;top:4px"><use href="#chr"/></svg><svg class="g" style="left:24px"><use href="#prj"/></svg><span style="left:45px">hongge</span></div>
<div class="r" style="top:780px"><svg width="8" height="12" style="left:9px;top:4px"><use href="#chr"/></svg><svg class="g" style="left:24px"><use href="#mvn"/></svg><span style="left:45px">mavenweb</span></div>
<div class="r" style="top:800px"><svg class="g" style="left:24px"><use href="#cprj"/></svg><span style="left:45px">reportng</span></div>
<div class="r" style="top:820px"><svg width="8" height="12" style="left:9px;top:4px"><use href="#chr"/></svg><svg class="g" style="left:24px"><use href="#prj"/></svg><span style="left:45px">Test</span></div>
<div class="r" style="top:840px"><svg width="8" height="12" style="left:9px;top:4px"><use href="#chr"/></svg><svg class="g" style="left:24px"><use href="#prj"/></svg><span style="left:45px">WebDriverLearn1</span></div>
</div>
<div class="vb" style="left:3px;top:995px;width:347px;height:15px"></div>
<div style="left:20px;top:995px;width:198px;height:15px;background:#cdcdcd"></div>
<svg width="8" height="12" style="left:7px;top:996px"><path d="M6 2L2 6l4 4" fill="none" stroke="#444" stroke-width="1.700"/></svg>
<svg width="8" height="12" style="left:338px;top:996px"><path d="M2 2l4 4-4 4" fill="none" stroke="#444" stroke-width="1.700"/></svg>

<!-- editor -->
<div class="p" style="left:358px;top:76px;width:1214px;height:771px"></div>
<div class="tb" style="left:359px;top:77px;width:1212px"></div>
<div style="left:359px;top:77px;width:172px;height:22px;background:#f9f9f9"></div>
<div class="at" style="left:530px;top:76px;width:155px;height:24px"></div>
<svg class="g" style="left:362px;top:80px"><use href="#jf"/></svg>
<div class="t" style="left:381px;top:78px;font-size:12.75px">BaiduHomePage.java</div>
<svg class="g" style="left:534px;top:80px"><use href="#jf"/></svg>
<div class="t" style="left:554px;top:78px;font-size:12.8px">TestWithPOM.java</div>
<svg width="12" height="12" style="left:666px;top:82px"><use href="#x"/></svg>
<svg width="12" height="6" style="left:1529px;top:81px"><use href="#min"/></svg>
<svg width="12" height="12" style="left:1552px;top:82px"><use href="#max"/></svg>
<div style="left:360px;top:102px;width:12px;height:726px;background:#f8f8f8"></div>
<div style="left:360px;top:697px;width:12px;height:102px;background:#4fa6c4;border:solid #2b80b8;border-width:0 0 1px 0;box-sizing:border-box;background-image:repeating-conic-gradient(#3b9ab8 0 25%,#7fc4da 0 50%);background-size:2px 2px"></div>
<div style="left:397px;top:102px;width:1px;height:726px;background:#f0f0f0"></div>
<div style="left:398px;top:697px;width:1143px;height:17px;background:#e8f2fe"></div>
<div style="left:456px;top:136px;width:216px;height:17px;background:#d4d4d4"></div>
<div style="left:440px;top:697px;width:32px;height:17px;background:#d4d4d4"></div>
<div id="nums">1
2
3
4
5
6
7
8
9
10
11
12
13
14
15
16
17
18
19
20
21
22
23
24
25
26
27
28
29
30
31
32
33
34
35
36
37
38
39
40
41
42
43</div>
<svg width="10" height="10" style="left:387px;top:139px"><use href="#fm"/></svg>
<svg width="10" height="10" style="left:387px;top:275px"><use href="#fm"/></svg>
<svg width="10" height="10" style="left:387px;top:513px"><use href="#fm"/></svg>
<svg width="10" height="10" style="left:387px;top:700px"><use href="#fm"/></svg>
<div id="code">
<div class="l" style="top:0"><b>package</b> testSuites;</div>
<div class="l" style="top:34px"><b>import</b> org.testng.annotations.Test;</div>
<div class="l" style="top:51px"><b>import</b> org.openqa.selenium.WebDriver;</div>
<div class="l" style="top:68px"><b>import</b> org.openqa.selenium.chrome.ChromeDriver;</div>
<div class="l" style="top:85px"><b>import</b> org.openqa.selenium.support.PageFactory;</div>
<div class="l" style="top:102px"><b>import</b> org.testng.annotations.BeforeClass;</div>
<div class="l" style="top:136px"><b>import</b> pageObjects.BaiduHomePage;</div>
<div class="l c" style="top:170px">/**</div>
<div class="l c" style="top:184px"> * <span class="d">@author</span> <span class="z">北京</span>-<span class="z">宏哥</span></div>
<div class="l c" style="top:204px"> *</div>
<div class="l c" style="top:218px"> * <span class="d">@<span class="z">公众号</span></span>:<span class="z">北京宏哥</span></div>
<div class="l c" style="top:238px"> *</div>
<div class="l c" style="top:252px"> * <span class="z">《手把手教你》系列基础篇（八十七）</span>-java+ <span style="text-decoration:underline wavy #e58a7a 1px">selenium</span><span class="z">自动化测试</span>-<span class="z">框架设计基础</span>-POM<span class="z">设计模式实现</span>-<span class="z">上篇（详解教程）</span></div>
<div class="l c" style="top:272px"> *</div>
<div class="l c" style="top:286px"> * 2022<span class="z">年</span>3<span class="z">月</span>20<span class="z">日</span></div>
<div class="l c" style="top:306px"> */</div>
<div class="l" style="top:340px"><b>public</b> <b>class</b> TestWithPOM {</div>
<div class="l" style="top:374px">    WebDriver <span class="f">driver</span>;</div>
<div class="l a" style="top:408px">    @BeforeClass</div>
<div class="l" style="top:425px">    <b>public</b> <b>void</b> setUp() <b>throws</b> Exception{</div>
<div class="l" style="top:459px">        System.<em>setProperty</em>(<span class="s">"webdriver.chrome.driver"</span>, <span class="s">".\\Tools\\chromedriver.exe"</span>);</div>
<div class="l" style="top:476px">        <span class="f">driver</span> = <b>new</b> ChromeDriver();</div>
<div class="l" style="top:493px">        <span class="f">driver</span>.manage().window().maximize();</div>
<div class="l" style="top:510px">        <span class="f">driver</span>.get(<span class="s">"https://www.baidu.com/"</span>);</div>
<div class="l" style="top:527px">        Thread.<em>sleep</em>(2000);</div>
<div class="l" style="top:544px">    }</div>
<div class="l a" style="top:595px">    @Test</div>
<div class="l" style="top:612px">    <b>public</b> <b>void</b> testLogin() <b>throws</b> InterruptedException{</div>
<div class="l" style="top:646px">        BaiduHomePage hp = PageFactory.<em>initElements</em>(<span class="f">driver</span>, BaiduHomePage.<b>class</b>);</div>
<div class="l" style="top:663px">        hp.login(<span class="s">"user1"</span>, <span class="s">"123456"</span>);</div>
<div class="l" style="top:680px">    }</div>
</div>
<div style="left:472px;top:697px;width:2px;height:17px;background:#000"></div>
<div class="vb" style="left:1541px;top:102px;width:15px;height:726px"></div>
<div style="left:1556px;top:102px;width:14px;height:726px;background:#f7f7f7"></div>
<div style="left:1541px;top:119px;width:15px;height:656px;background:#cdcdcd"></div>
<svg width="12" height="8" style="left:1543px;top:106px"><path d="M2 6l4-4 4 4" fill="none" stroke="#444" stroke-width="1.700"/></svg>
<svg width="12" height="8" style="left:1543px;top:814px"><path d="M2 2l4 4 4-4" fill="none" stroke="#444" stroke-width="1.700"/></svg>
<div style="left:1560px;top:147px;width:8px;height:5px;background:#eee;border:1px solid #ddd;box-sizing:border-box"></div>
<div style="left:1560px;top:668px;width:8px;height:5px;background:#eee;border:1px solid #ddd;box-sizing:border-box"></div>
<div class="vb" style="left:360px;top:828px;width:1210px;height:17px"></div>
<svg width="8" height="12" style="left:402px;top:830px"><path d="M6 2L2 6l4 4" fill="none" stroke="#aaa" stroke-width="1.700"/></svg>
<svg width="8" height="12" style="left:1528px;top:830px"><path d="M2 2l4 4-4 4" fill="none" stroke="#aaa" stroke-width="1.700"/></svg>

<!-- console panel -->
<div class="p" style="left:358px;top:851px;width:1214px;height:162px"></div>
<div class="tb" style="left:359px;top:852px;width:1212px"></div>
<div style="left:361px;top:876px;width:1208px;height:135px;background:#f0f0f0"></div>
<div style="left:361px;top:894px;width:1208px;height:1px;background:#a8a8a8"></div>
<div style="left:441px;top:852px;width:1px;height:22px;background:#a0a0a0"></div>
<div style="left:515px;top:852px;width:1px;height:22px;background:#a0a0a0"></div>
<div style="left:609px;top:852px;width:1px;height:22px;background:#a0a0a0"></div>
<div style="left:1020px;top:852px;width:1px;height:22px;background:#a0a0a0"></div>
<div class="at" style="left:677px;top:851px;width:96px;height:24px"></div>
<svg class="g" style="left:361px;top:856px"><use href="#pb"/></svg>
<div class="t" style="left:381px;top:854px">Problems</div>
<div class="t" style="left:447px;top:854px;color:#2a6ca8">@</div>
<div class="t" style="left:463px;top:854px;font-size:12.9px">Javadoc</div>
<svg class="g" style="left:520px;top:856px"><use href="#de"/></svg>
<div class="t" style="left:539px;top:854px">Declaration</div>
<svg class="g" style="left:613px;top:856px"><use href="#sr"/></svg>
<div class="t" style="left:633px;top:854px;font-size:12.6px">Search</div>
<svg class="g" style="left:681px;top:856px"><use href="#con"/></svg>
<div class="t" style="left:700px;top:854px">Console</div>
<svg width="12" height="12" style="left:754px;top:858px"><use href="#x"/></svg>
<svg width="18" height="18" style="left:776px;top:855px"><use href="#ng"/></svg>
<div class="t" style="left:797px;top:854px;font-size:13px">Results of running class TestWithPOM</div>
<svg class="g" style="left:1424px;top:855px"><use href="#pin"/></svg>
<svg class="g" style="left:1447px;top:855px"><use href="#cong"/></svg>
<svg width="8" height="5" style="left:1470px;top:861px"><use href="#ddg"/></svg>
<svg class="g" style="left:1487px;top:855px"><use href="#new"/></svg>
<svg width="8" height="5" style="left:1510px;top:861px"><use href="#dd"/></svg>
<svg width="12" height="6" style="left:1529px;top:856px"><use href="#min"/></svg>
<svg width="12" height="12" style="left:1552px;top:856px"><use href="#max"/></svg>
<div class="t" style="left:361px;top:876px">No consoles to display at this time.</div>

<!-- task list -->
<div class="p" style="left:1577px;top:76px;width:320px;height:467px"></div>
<div class="tb" style="left:1578px;top:77px;width:318px"></div>
<div class="at" style="left:1577px;top:76px;width:100px;height:24px"></div>
<svg class="g" style="left:1582px;top:80px"><use href="#task"/></svg>
<div class="t" style="left:1601px;top:78px">Task List</div>
<svg width="12" height="12" style="left:1658px;top:82px"><use href="#x"/></svg>
<svg width="12" height="6" style="left:1853px;top:81px"><use href="#min"/></svg>
<svg width="12" height="12" style="left:1876px;top:82px"><use href="#max"/></svg>
<div class="vb" style="left:1580px;top:102px;width:314px;height:51px"></div>
<svg class="g" style="left:1639px;top:105px"><use href="#nt"/></svg>
<svg width="8" height="5" style="left:1662px;top:111px"><use href="#dd"/></svg>
<div class="sep" style="left:1677px;top:104px;height:18px"></div>
<div style="left:1683px;top:102px;width:23px;height:21px;background:#c8e0f5;border:1px solid #a5cbea;box-sizing:border-box"></div>
<svg class="g" style="left:1687px;top:105px"><use href="#tr1"/></svg>
<svg class="g" style="left:1710px;top:105px"><use href="#tr2"/></svg>
<div class="sep" style="left:1731px;top:104px;height:18px"></div>
<svg class="g" style="left:1740px;top:105px"><use href="#gr"/></svg>
<div class="sep" style="left:1762px;top:104px;height:18px"></div>
<svg class="g" style="left:1771px;top:105px"><use href="#fx"/></svg>
<svg class="g" style="left:1794px;top:105px"><use href="#fp"/></svg>
<svg class="g" style="left:1818px;top:105px"><use href="#col"/></svg>
<div class="sep" style="left:1839px;top:104px;height:18px"></div>
<svg class="g" style="left:1848px;top:105px"><use href="#syn"/></svg>
<svg width="11" height="6" style="left:1880px;top:108px"><use href="#ddo"/></svg>
<div style="left:1583px;top:129px;width:112px;height:21px;background:#fff;border:1px solid #a8a8a8;box-sizing:border-box"></div>
<div class="t" style="left:1592px;top:130px;color:#555">Find</div>
<svg width="14" height="14" style="left:1678px;top:132px"><use href="#srch"/></svg>
<svg width="6" height="10" style="left:1707px;top:135px"><path d="M1 0l4 5-4 5z" fill="#444"/></svg>
<div class="t" style="left:1723px;top:130px;color:#2a5db0">All</div>
<svg width="6" height="10" style="left:1746px;top:135px"><path d="M1 0l4 5-4 5z" fill="#444"/></svg>
<div class="t" style="left:1763px;top:130px;color:#2a5db0;font-size:12.8px">Activate...</div>
<div style="left:1578px;top:473px;width:318px;height:69px;background:linear-gradient(#dfe9f4,#fff);border-top:1px solid #b8c4d0;box-sizing:border-box"></div>
<svg class="g" style="left:1585px;top:477px"><circle cx="7" cy="8" r="6" fill="#fff" stroke="#1f5f9f"/><path d="M7 7v4M5.800 11.500h2.400M6 7h1M7 4v1.300" stroke="#1f5f9f"/></svg>
<div class="t" style="left:1607px;top:477px;font-weight:bold;font-size:13.7px;color:#1a6cc0">Connect Mylyn</div>
<svg width="12" height="12" style="left:1874px;top:480px"><use href="#x"/></svg>
<div class="t" style="left:1607px;top:500px;font-size:13.3px"><a style="text-decoration:underline">Connect</a> to your task and ALM tools or <a style="text-decoration:underline">create</a> a</div>
<div class="t" style="left:1607px;top:517px;font-size:13.2px">local task.</div>

<!-- outline / ant -->
<div class="p" style="left:1577px;top:548px;width:320px;height:465px"></div>
<div class="tb" style="left:1578px;top:549px;width:318px"></div>
<div class="at" style="left:1647px;top:548px;width:68px;height:24px"></div>
<svg class="g" style="left:1581px;top:551px"><use href="#ol"/></svg>
<div class="t" style="left:1601px;top:550px">Outline</div>
<svg class="g" style="left:1650px;top:551px"><use href="#ant"/></svg>
<div class="t" style="left:1670px;top:550px">Ant</div>
<svg width="12" height="12" style="left:1696px;top:553px"><use href="#x"/></svg>
<svg width="12" height="6" style="left:1853px;top:552px"><use href="#min"/></svg>
<svg width="12" height="12" style="left:1876px;top:552px"><use href="#max"/></svg>
<div class="vb" style="left:1580px;top:573px;width:314px;height:21px"></div>
<svg class="g" style="left:1736px;top:576px"><use href="#antp"/></svg>
<svg class="g" style="left:1759px;top:576px"><use href="#rk"/></svg>
<svg class="g" style="left:1781px;top:576px"><use href="#tg"/></svg>
<svg class="g" style="left:1805px;top:576px"><use href="#rg"/></svg>
<svg class="g" style="left:1829px;top:576px"><use href="#xg"/></svg>
<svg class="g" style="left:1852px;top:576px"><use href="#xxg"/></svg>
<svg class="g" style="left:1875px;top:576px"><use href="#colg"/></svg>

<!-- right trim -->
<svg width="12" height="12" style="left:1902px;top:81px"><use href="#res"/></svg>
<svg class="g" style="left:1900px;top:99px"><use href="#mod"/></svg>
<svg width="12" height="12" style="left:1902px;top:125px"><use href="#res"/></svg>
<svg class="g" style="left:1900px;top:145px"><use href="#tb2"/></svg>

<!-- status -->
<div class="sep" style="left:1342px;top:1014px;height:21px"></div>
<div class="sep" style="left:1446px;top:1014px;height:21px"></div>
<div class="sep" style="left:1544px;top:1014px;height:21px"></div>
<div class="t" style="left:1350px;top:1015px">Writable</div>
<div class="t" style="left:1454px;top:1015px">Smart Insert</div>
<div class="t" style="left:1552px;top:1015px">36 : 10</div>

<div id="wm">掘金技术社区 @ 北京_宏哥</div>
</body></html>
